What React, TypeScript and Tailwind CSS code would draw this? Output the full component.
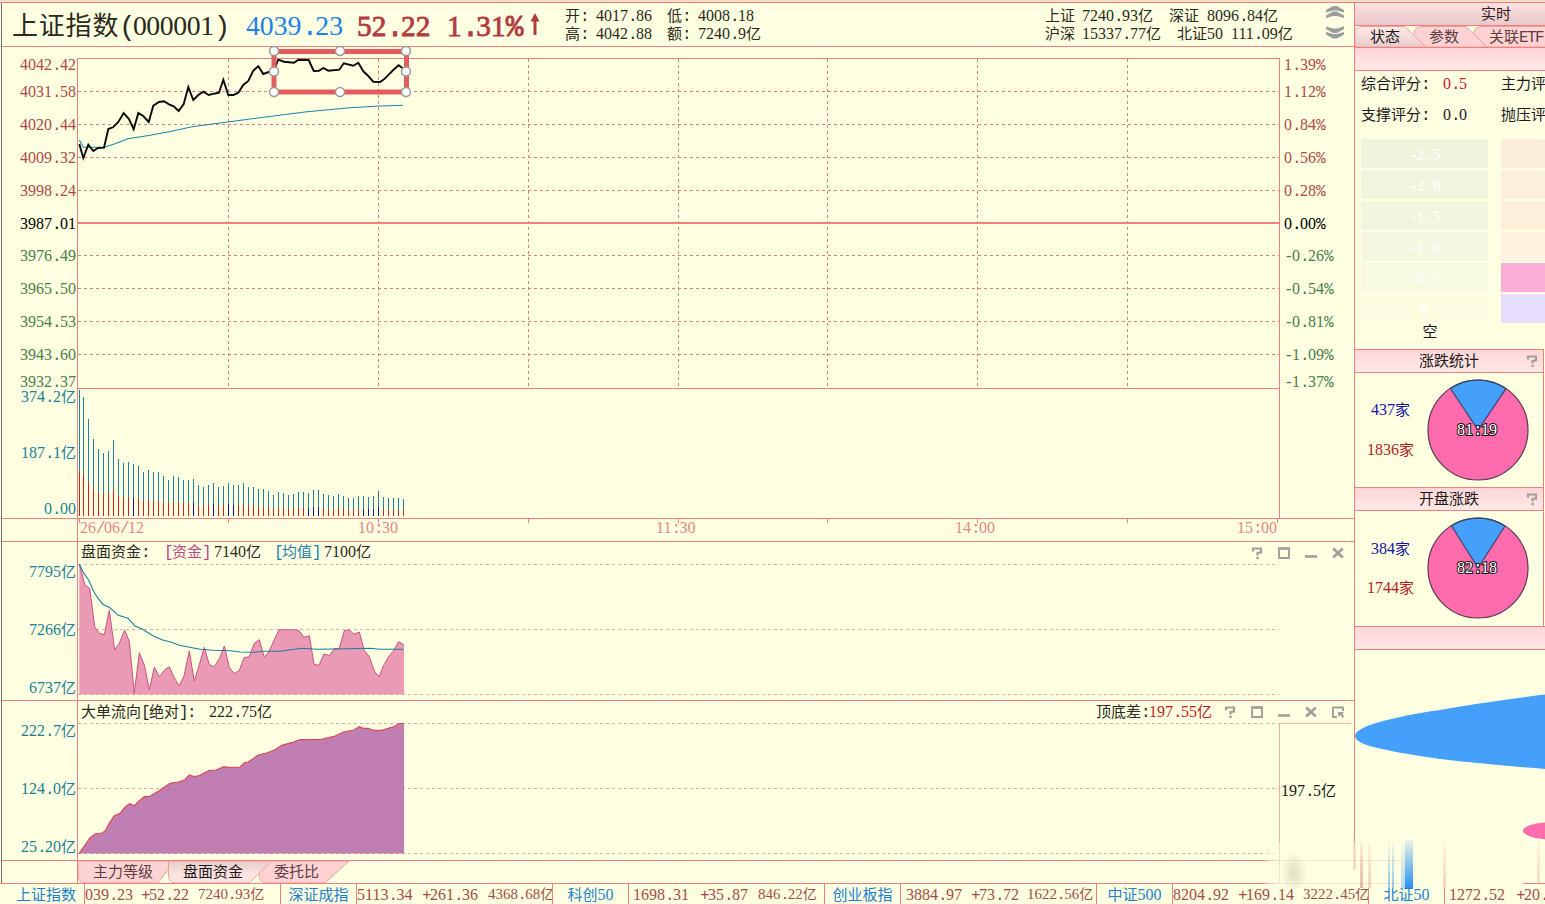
import React from 'react';
import { clsx } from 'clsx';

type Point = [number, number];

interface TickerItem {
  name: string;
  labelWidth: string;
  pad: string;
  price: string;
  priceWidth: string;
  change: string;
  changeWidth: string;
  amount: string;
}

// Series are stored on a grid three times finer than a screen pixel
const GRID = 3;

const price: Point[] = [
  [238, 432], [250, 474], [265, 434], [280, 453], [294, 444], [312, 443], [325, 387], [339, 382], [355, 366], [371, 339],
  [387, 357], [401, 388], [415, 339], [430, 348], [446, 366], [460, 317], [477, 306], [492, 304], [507, 313], [521, 319],
  [536, 333], [551, 312], [565, 261], [580, 300], [595, 285], [610, 275], [626, 285], [642, 281], [657, 278], [670, 239],
  [685, 285], [700, 285], [715, 278], [730, 255], [745, 243], [760, 212], [775, 199], [790, 222], [806, 216], [820, 214],
  [835, 179], [852, 185], [882, 188], [895, 179], [926, 180], [941, 213], [957, 212], [970, 204], [985, 212], [1018, 209],
  [1031, 190], [1060, 197], [1075, 188], [1090, 214], [1105, 228], [1120, 245], [1140, 246], [1152, 238], [1167, 223],
  [1182, 208], [1196, 196], [1210, 206],
];

const average: Point[] = [
  [238, 420], [250, 442], [312, 442], [345, 431], [384, 416], [450, 406], [507, 395], [576, 380], [666, 368], [750, 357],
  [921, 335], [1050, 323], [1125, 319], [1209, 316],
];

const volume = [
  377, 357, 290, 230, 200, 188, 195, 227, 170, 158, 161, 155, 149, 131, 137, 131, 131, 119, 107, 119, 116, 107, 107, 111,
  92, 86, 92, 98, 86, 89, 98, 92, 92, 98, 86, 86, 80, 80, 74, 62, 71, 68, 62, 65, 71, 71, 69, 77, 77, 65, 62, 59, 65, 59,
  53, 53, 59, 59, 56, 59, 74, 56, 53, 53, 53, 50,
];
const blueBars = [11, 23, 27, 30, 31, 46, 47, 48, 57, 58, 59, 60];

const funds: Point[] = [
  [238, 72], [255, 136], [269, 145], [284, 260], [298, 280], [313, 284], [328, 211], [344, 330], [358, 310], [374, 270],
  [388, 305], [403, 460], [418, 338], [433, 375], [448, 450], [463, 382], [478, 410], [493, 391], [508, 380], [523, 414],
  [538, 438], [552, 408], [568, 333], [583, 424], [598, 374], [613, 322], [628, 374], [643, 380], [658, 356], [673, 318],
  [688, 382], [703, 401], [718, 391], [732, 353], [748, 350], [763, 310], [778, 299], [793, 352], [806, 336], [837, 269],
  [885, 269], [897, 272], [912, 292], [928, 287], [942, 373], [957, 376], [972, 342], [988, 347], [1003, 326], [1018, 325],
  [1033, 272], [1047, 269], [1062, 283], [1078, 276], [1093, 332], [1108, 350], [1123, 393], [1137, 411], [1152, 374],
  [1168, 347], [1180, 334], [1196, 305], [1212, 314],
];

const fundsMean: Point[] = [
  [238, 72], [250, 98], [266, 120], [280, 152], [295, 176], [310, 194], [328, 202], [355, 226], [384, 235], [405, 258],
  [425, 266], [460, 288], [490, 301], [510, 305], [538, 316], [600, 328], [640, 331], [690, 332], [720, 336], [765, 337],
  [790, 334], [840, 334], [905, 325], [950, 328], [1040, 326], [1110, 325], [1140, 328], [1210, 328],
];

const orders: Point[] = [
  [238, 460], [255, 435], [270, 414], [285, 402], [305, 399], [315, 394], [328, 370], [343, 347], [360, 340], [375, 322],
  [389, 311], [403, 317], [418, 302], [433, 290], [450, 289], [475, 274], [510, 250], [535, 246], [555, 239], [568, 225],
  [585, 230], [600, 226], [628, 211], [648, 210], [672, 200], [685, 202], [720, 201], [733, 188], [745, 186], [775, 165],
  [800, 159], [825, 149], [845, 136], [875, 128], [900, 119], [965, 118], [1005, 108], [1030, 96], [1062, 90], [1078, 80],
  [1090, 85], [1105, 85], [1120, 91], [1145, 91], [1180, 80], [1200, 70], [1212, 70],
];

const priceLabels = ['4042.42', '4031.58', '4020.44', '4009.32', '3998.24', '3987.01', '3976.49', '3965.50', '3954.53', '3943.60', '3932.37'];
const percentLabels = ['1.39%', '1.12%', '0.84%', '0.56%', '0.28%', '0.00%', '-0.26%', '-0.54%', '-0.81%', '-1.09%', '-1.37%'];
const volumeLabels = ['374.2亿', '187.1亿', '0.00'];

const levels = [
  { label: '-2.5', left: 'bg-[#f0f4dc]', right: 'bg-[#faeed8]' },
  { label: '-2.0', left: 'bg-[#f1f5dd]', right: 'bg-[#fbf0da]' },
  { label: '-1.5', left: 'bg-[#f3f6df]', right: 'bg-[#fdf1dc]' },
  { label: '-1.0', left: 'bg-[#f5f7e0]', right: 'bg-[#fef3de]' },
  { label: '-0.5', left: 'bg-[#f7f9e1]', right: 'bg-[#fdaed6]' },
  { label: '0', left: 'bg-[#fefde2]', right: 'bg-[#e6defc]' },
];

const ticker: TickerItem[] = [
  { name: '上证指数', labelWidth: 'w-[83px] pr-[8px] justify-end', pad: 'pl-0', price: '039.23', priceWidth: 'w-[56px]', change: '+52.22', changeWidth: 'w-[57px]', amount: '7240.93亿' },
  { name: '深证成指', labelWidth: 'w-[75px] justify-center', pad: 'pl-0', price: '5113.34', priceWidth: 'w-[65px]', change: '+261.36', changeWidth: 'w-[66px]', amount: '4368.68亿' },
  { name: '科创50', labelWidth: 'w-[75px] justify-center', pad: 'pl-[4px]', price: '1698.31', priceWidth: 'w-[67px]', change: '+35.87', changeWidth: 'w-[58px]', amount: '846.22亿' },
  { name: '创业板指', labelWidth: 'w-[75px] justify-center', pad: 'pl-[5px]', price: '3884.97', priceWidth: 'w-[65px]', change: '+73.72', changeWidth: 'w-[56px]', amount: '1622.56亿' },
  { name: '中证500', labelWidth: 'w-[75px] justify-center', pad: 'pl-0', price: '8204.92', priceWidth: 'w-[65px]', change: '+169.14', changeWidth: 'w-[65px]', amount: '3222.45亿' },
  { name: '北证50', labelWidth: 'w-[75px] justify-center', pad: 'pl-[4px]', price: '1272.52', priceWidth: 'w-[67px]', change: '+20.', changeWidth: 'w-[57px]', amount: '' },
];

const toPoints = (series: Point[], top: number) =>
  series.map(([x, y]) => `${(x / GRID).toFixed(1)},${(top + y / GRID).toFixed(1)}`).join(' ');

// Every half-width glyph takes the same cell: digits in serif, signs in tightened mono
function Txt({ children, className }: { children: string; className?: string }) {
  const parts = children.split(/([0-9]+|[^\u0020-\u007e]+)/).filter(Boolean);
  return (
    <span className={clsx('whitespace-pre', className)}>
      {parts.map((part, i) => {
        if (/^[0-9]/.test(part)) {
          return <span key={i} className="text-[1.067em] leading-[0] font-['Liberation_Serif',serif]">{part}</span>;
        }
        if (part.charCodeAt(0) > 126) return part;
        return <span key={i} className="text-[1.067em] leading-[0] tracking-[-0.1em] font-['Liberation_Mono',monospace]">{part}</span>;
      })}
    </span>
  );
}

function HelpIcon() {
  return (
    <svg width="12" height="12" viewBox="0 0 12 12" className="shrink-0">
      <path d="M2 4.5V1.5H10V5.5L6.5 6V8.5" fill="none" stroke="#a0a09a" strokeWidth="2.2" />
      <rect x="5.4" y="9.8" width="2.4" height="2.2" fill="#a0a09a" />
    </svg>
  );
}

function WindowIcons({ popout }: { popout?: boolean }) {
  return (
    <div className="flex items-center gap-[15px]">
      <HelpIcon />
      <svg width="12" height="12" viewBox="0 0 12 12">
        <path d="M1 1.5H11V11H1Z" fill="none" stroke="#a0a09a" strokeWidth="1.9" />
        <path d="M0 1.5H12" stroke="#a0a09a" strokeWidth="2.4" />
      </svg>
      <svg width="12" height="12" viewBox="0 0 12 12">
        <path d="M0 9.5H12" stroke="#a0a09a" strokeWidth="2.6" />
      </svg>
      <svg width="12" height="12" viewBox="0 0 12 12">
        <path d="M1.2 1.5L10.8 10.5M10.8 1.5L1.2 10.5" stroke="#a0a09a" strokeWidth="2.8" />
      </svg>
      {popout && (
        <svg width="12" height="12" viewBox="0 0 12 12">
          <path d="M5 11H1V1.5H11V5" fill="none" stroke="#a0a09a" strokeWidth="1.9" />
          <path d="M6 6H12L10.5 7.5L12 10.5L10.5 12L8.5 9L6.5 11Z" fill="#a0a09a" />
        </svg>
      )}
    </div>
  );
}

function Header() {
  return (
    <div className="flex h-11 border-b border-[#f08080] pl-[10px]">
      <div className="flex w-[553px] shrink-0 items-center pb-[2px] leading-[40px]">
        <div className="flex w-[234px] shrink-0 text-[26px] text-[#2a2a20]">
          <Txt className="w-[107px] tracking-[0.8px]">上证指数</Txt>
          <Txt className="tracking-[-0.4px]">(000001)</Txt>
        </div>
        <div className="w-[111px] shrink-0 text-[26px] text-[#2080ee]"><Txt>4039.23</Txt></div>
        <div className="w-[90px] shrink-0 text-[27.5px] text-[#b23a40] [-webkit-text-stroke:0.8px_#b23a40]"><Txt>52.22</Txt></div>
        <div className="w-[82px] shrink-0 text-[27.5px] text-[#b23a40] [-webkit-text-stroke:0.8px_#b23a40]"><Txt>1.31%</Txt></div>
        <svg width="12" height="24" viewBox="0 0 12 24">
          <path d="M6 1L10.5 9.5H1.5Z" fill="#b23a40" />
          <path d="M6 6V23" stroke="#b23a40" strokeWidth="3" />
        </svg>
      </div>
      <div className="grid h-9 grid-cols-[102px_378px] pt-[3px] text-[15px] leading-[18px] text-[#2a2a20]">
        <Txt>开: 4017.86</Txt>
        <Txt>低: 4008.18</Txt>
        <Txt>高: 4042.88</Txt>
        <Txt>额: 7240.9亿</Txt>
      </div>
      <div className="w-[280px] pt-[3px] text-[15px] leading-[18px] text-[#2a2a20]">
        <div className="flex">
          <Txt className="w-[37px]">上证</Txt>
          <Txt className="w-[87px]">7240.93亿</Txt>
          <Txt className="w-[38px]">深证</Txt>
          <Txt>8096.84亿</Txt>
        </div>
        <div className="flex">
          <Txt className="w-[37px]">沪深</Txt>
          <Txt className="w-[95px]">15337.77亿</Txt>
          <Txt className="w-[54px]">北证50</Txt>
          <Txt>111.09亿</Txt>
        </div>
      </div>
      <svg width="20" height="40" viewBox="1324 3 20 40">
        <g fill="#9a9c9e">
          <path d="M1325 10L1332 6H1336L1343 10V12.500L1336 10.500H1332L1325 12.500Z" />
          <path d="M1325 15.500L1332 11.500H1336L1343 15.500V18L1336 16H1332L1325 18Z" />
          <path d="M1325 29L1332 33H1336L1343 29V26.500L1336 28.500H1332L1325 26.500Z" />
          <path d="M1325 34.500L1332 38.500H1336L1343 34.500V32L1336 34H1332L1325 32Z" />
        </g>
      </svg>
    </div>
  );
}

function MainChart() {
  const verticals = [228, 378, 528, 678, 827, 977, 1127];
  const horizontals = [91, 124, 157, 190, 255, 288, 321, 354];
  const ticks = [79, 228, 378, 528, 678, 827, 977, 1127, 1277];
  const handles: Point[] = [[274, 51], [340, 51], [406, 51], [274, 71.5], [406, 71.5], [274, 92], [340, 92], [406, 92]];

  return (
    <svg width="1203" height="471" viewBox="77 47 1203 471" className="shrink-0 overflow-visible">
      <g fill="none" stroke="#d98080" strokeDasharray="3 3" shapeRendering="crispEdges">
        {verticals.map((x) => <path key={x} d={`M${x + 0.5} 59V387`} />)}
        {horizontals.map((y) => <path key={y} d={`M78 ${y + 0.5}H1279`} />)}
      </g>
      <g fill="none" stroke="#f08080" shapeRendering="crispEdges">
        <path d="M77.5 541V58.5H1279.5V518M77 388.5H1279" />
        <path d="M78 223H1279" strokeWidth="2" />
        {ticks.map((x) => <path key={x} d={`M${x + 0.5} 519v4`} />)}
      </g>
      <g shapeRendering="crispEdges">
        {volume.map((v, i) => {
          const x = i === 0 ? 79 : i === 1 ? 83 : 88 + (i - 2) * 5;
          const h = Math.round(v / GRID);
          const inner = Math.round(h * 0.35);
          return (
            <g key={i}>
              <rect x={x} y={516 - h} width="1" height={h} fill="#1f7f9c" />
              <rect x={x} y={516 - inner} width="1" height={inner} fill={blueBars.includes(i) ? '#1010a0' : '#d02018'} />
            </g>
          );
        })}
      </g>
      <polyline points={toPoints(average, 0)} fill="none" stroke="#1f84ac" strokeWidth="1.1" />
      <polyline points={toPoints(price, 0)} fill="none" stroke="#0a0a08" strokeWidth="1.9" />
      {/* selection frame */}
      <rect x="274" y="51.5" width="132.5" height="40.5" fill="none" stroke="#e65c5c" strokeWidth="5" />
      {handles.map(([x, y]) => (
        <circle key={`${x}-${y}`} cx={x} cy={y} r="4.5" fill="#fff" stroke="#999" strokeWidth="1.5" />
      ))}
    </svg>
  );
}

function ChartArea() {
  const rows = 'grid grid-rows-[27px_33px_33px_33px_33px_32px_33px_33px_33px_27px_15px_56px_56px] text-[15px] leading-[14px] pt-[10px]';
  const tone = (i: number) => (i < 5 ? 'text-[#b04848]' : i === 5 ? 'text-black' : 'text-[#4a7d4c]');
  return (
    <div className="flex h-[472px] border-b border-[#f08080]">
      <div className={clsx(rows, 'w-[75px] shrink-0 justify-items-end pr-px')}>
        {priceLabels.map((label, i) => <Txt key={label} className={tone(i)}>{label}</Txt>)}
        {volumeLabels.map((label) => <Txt key={label} className="text-[#1c7f9a]">{label}</Txt>)}
      </div>
      <MainChart />
      <div className={clsx(rows, 'pl-[4px]')}>
        {percentLabels.map((label, i) => <Txt key={label} className={tone(i)}>{label}</Txt>)}
      </div>
    </div>
  );
}

function TimeAxis() {
  return (
    <div className="flex h-[23px] border-b border-[#f08080] pl-[78px] text-[15px] leading-[16px] text-[#e08886]">
      <Txt className="w-[278px]">26/06/12</Txt>
      <Txt className="w-[298px]">10:30</Txt>
      <Txt className="w-[299px]">11:30</Txt>
      <Txt className="w-[282px]">14:00</Txt>
      <Txt>15:00</Txt>
    </div>
  );
}

function SideLabels({ labels }: { labels: string[] }) {
  return (
    <div className="grid w-[75px] shrink-0 grid-rows-[58px_58px_18px] content-start justify-items-end pt-[20px] pr-px text-[15px] leading-[18px] text-[#1c7f9a]">
      {labels.map((label) => <Txt key={label}>{label}</Txt>)}
    </div>
  );
}

function FundsPanel() {
  return (
    <div className="flex h-[159px] border-b border-[#f08080]">
      <SideLabels labels={['7795亿', '7266亿', '6737亿']} />
      <div className="flex-1 border-l border-[#f08080]">
        <div className="flex h-[22px] items-center pr-[10px] pb-[4px] pl-[3px] text-[15px] leading-[18px] text-[#2a2a20]">
          <Txt className="w-[83px]">盘面资金:</Txt>
          <Txt className="w-[50px] text-[#b84a86]">[资金]</Txt>
          <Txt className="w-[60px]">7140亿</Txt>
          <Txt className="w-[50px] text-[#1c7fae]">[均值]</Txt>
          <Txt>7100亿</Txt>
          <div className="ml-auto pt-[4px]"><WindowIcons /></div>
        </div>
        <svg width="1202" height="136" viewBox="78 564 1202 136">
          <polygon points={`${toPoints(funds, 540)} 404,694.5 79.3,694.5`} fill="#ea9ab4" />
          <polyline points={toPoints(funds, 540)} fill="none" stroke="#cc4f80" />
          <path d="M78 564.5H1279M78 629.5H1279M78 694.5H1279" stroke="#dc8c82" strokeOpacity=".7" strokeDasharray="3 3" />
          <polyline points={toPoints(fundsMean, 540)} fill="none" stroke="#1c7f9c" strokeWidth="1.1" />
        </svg>
      </div>
    </div>
  );
}

function OrdersPanel() {
  return (
    <div className="flex h-[160px] border-b border-[#f08080]">
      <SideLabels labels={['222.7亿', '124.0亿', '25.20亿']} />
      <div className="flex-1 border-l border-[#f08080]">
        <div className="flex h-[22px] items-center pr-[10px] pb-[3px] pl-[3px] text-[15px] leading-[18px] text-[#2a2a20]">
          <Txt className="w-[128px]">大单流向[绝对]:</Txt>
          <Txt>222.75亿</Txt>
          <Txt className="ml-auto">顶底差:</Txt>
          <Txt className="mr-[12px] text-[#c01c28]">197.55亿</Txt>
          <div className="pt-[3px]"><WindowIcons popout /></div>
        </div>
        <div className="flex">
          <svg width="1201" height="137" viewBox="78 723 1201 137">
            <polygon points={`${toPoints(orders, 700)} 404,853.5 79.3,853.5`} fill="#c07eb2" />
            <polyline points={toPoints(orders, 700)} fill="none" stroke="#dc4858" strokeWidth="1.2" />
            <path d="M78 723.5H1279M78 788.5H1279M78 853.5H1279" stroke="#b86a70" strokeOpacity=".55" strokeDasharray="3 3" />
          </svg>
          <div className="mr-[2px] flex-1 border-t border-l border-[#eeb0a4] pt-[57px] pl-px text-[15px] leading-[18px] text-[#1a1a14]">
            <Txt>197.5亿</Txt>
          </div>
        </div>
      </div>
    </div>
  );
}

function BottomTabs() {
  return (
    <div className="flex h-[22px] pl-[75px]">
      <div className="relative flex flex-1 border-l border-[#f08080] pl-[15px] text-[15px] leading-[20px] text-[#5c4040]">
        <svg width="280" height="22" viewBox="78 861 280 22" className="absolute top-0 left-0">
          <defs>
            <linearGradient id="tabActive" x2="0" y2="1">
              <stop offset="0" stopColor="#e6cccc" />
              <stop offset=".6" stopColor="#fde4e2" />
            </linearGradient>
          </defs>
          <g stroke="#f0a09a">
            <path d="M259 861V875Q259 883 267 883H325L349 861Z" fill="#ffd2d4" />
            <path d="M78 861V875Q78 883 86 883H158L175 861Z" fill="#ffd2d4" />
            <path d="M168.500 861V875Q168.500 883 176 883H249L272 861Z" fill="url(#tabActive)" />
          </g>
        </svg>
        <Txt className="relative w-[90px]">主力等级</Txt>
        <Txt className="relative w-[91px] text-[#201818]">盘面资金</Txt>
        <Txt className="relative">委托比</Txt>
      </div>
    </div>
  );
}

function SectionTitle({ children }: { children?: string }) {
  return (
    <div className="flex h-6 items-center border-y border-[#f08080] bg-linear-to-b from-[#ffd6d8] to-[#ffe8e6] pl-[64px] text-[15px] leading-[18px] text-[#201818]">
      {children && (
        <>
          <Txt className="w-[107px] pb-[3px]">{children}</Txt>
          <HelpIcon />
        </>
      )}
    </div>
  );
}

function PieSection({ title, down, up, ratio, wedge, last }: { title: string; down: string; up: string; ratio: string; wedge: string; last?: boolean }) {
  return (
    <div className="mr-px border-r border-[#f08080]">
      <SectionTitle>{title}</SectionTitle>
      <div className={clsx('flex', last ? 'h-[115px]' : 'h-[114px]')}>
        <div className={clsx('flex w-[71px] flex-col items-center text-[15px] leading-[18px]', last ? 'gap-[21px] pt-[28px]' : 'gap-[22px] pt-[27px]')}>
          <Txt className="text-[#1414a0]">{down}</Txt>
          <Txt className="text-[#b01c1c]">{up}</Txt>
        </div>
        <div className={clsx('relative flex items-center justify-center', last && 'pb-[1px]')}>
          <svg width="104" height="104" viewBox="-52 -52 104 104">
            <circle r="50" fill="#ff6cae" stroke="#5a3850" strokeWidth="1.2" />
            <path d={wedge} fill="#44a0fa" stroke="#3a4468" strokeWidth="1.2" />
          </svg>
          <span className="absolute top-[47px] left-[31px] text-[15px] leading-[18px] text-white [paint-order:stroke] [-webkit-text-stroke:2px_#101010]">
            <Txt>{ratio}</Txt>
          </span>
        </div>
      </div>
    </div>
  );
}

function SidePanel() {
  return (
    <div className="w-[191px] shrink-0 overflow-hidden border-l border-[#f08080] text-[15px] leading-[18px]">
      <div className="flex h-[23px] items-center border-b border-[#f08080] bg-linear-to-b from-[#ffe2e2] to-[#e8c8cb] pb-[2px] pl-[126px] text-[#302020]">
        <Txt>实时</Txt>
      </div>
      <div className="relative flex h-[22px] items-center border-b border-[#f08080] pb-px pl-[15px]">
        <svg width="190" height="21" viewBox="1355 26 190 21" className="absolute top-0 left-0">
          <defs>
            <linearGradient id="statusTab" x2="0" y2="1">
              <stop offset="0" stopColor="#ffeae8" />
              <stop offset="1" stopColor="#e6cccc" />
            </linearGradient>
          </defs>
          <g stroke="#f0a09a">
            <path d="M1474 47V34Q1474 26.500 1482 26.500H1550V47Z" fill="#ffd2d4" />
            <path d="M1414 47V34Q1414 26.500 1422 26.500H1466L1487 47Z" fill="#ffd2d4" />
            <path d="M1355 47V31Q1357 26.500 1364 26.500H1405L1426 47Z" fill="url(#statusTab)" />
          </g>
        </svg>
        <Txt className="relative w-[59px] text-[#201818]">状态</Txt>
        <Txt className="relative w-[60px] text-[#5c4040]">参数</Txt>
        <Txt className="relative text-[#5c4040]">关联ETF</Txt>
      </div>
      <div className="h-[23px] border-b border-[#f08080] bg-linear-to-b from-[#ffd6d8] to-[#ffe8e6]" />
      <div className="h-[278px] pt-[3px] pl-[6px] text-[#201818]">
        <div className="flex h-[31px]">
          <Txt className="w-[82px] shrink-0">综合评分:</Txt>
          <Txt className="w-[58px] shrink-0 text-[#c8202c]">0.5</Txt>
          <Txt>主力评</Txt>
        </div>
        <div className="flex h-[34px]">
          <Txt className="w-[82px] shrink-0">支撑评分:</Txt>
          <Txt className="w-[58px] shrink-0">0.0</Txt>
          <Txt>抛压评</Txt>
        </div>
        <div className="flex flex-col gap-[2px]">
          {levels.map((level) => (
            <div key={level.label} className="flex h-[29px] gap-[13px]">
              <div className={clsx('flex w-[127px] shrink-0 items-center justify-center font-bold text-[#fdfdf4]', level.left)}>
                <Txt>{level.label}</Txt>
              </div>
              <div className={clsx('w-[50px] shrink-0', level.right)} />
            </div>
          ))}
        </div>
        <div className="w-[138px] text-center leading-[16px]"><Txt>空</Txt></div>
      </div>
      <PieSection title="涨跌统计" down="437家" up="1836家" ratio="81:19" wedge="M0 0L-27.500 -41.500A50 50 0 0 1 28 -41.300Z" />
      <PieSection title="开盘涨跌" down="384家" up="1744家" ratio="82:18" wedge="M0 0L-26.500 -42.300A50 50 0 0 1 27 -42Z" last />
      <SectionTitle />
      <svg width="190" height="233" viewBox="1355 650 190 233">
        <path d="M1546 694.500C1500 700 1465 705.500 1440 710C1415 713.500 1395 717.500 1376 723C1350 731 1350 739 1366.500 745C1385 751 1430 758 1453 760.500C1490 764.500 1520 767 1546 769Z" fill="#44a0fa" />
        <path d="M1546 822.500C1528 824 1523 828 1523 831S1530 838 1546 839.500Z" fill="#ff6cae" />
      </svg>
    </div>
  );
}

function TickerBar() {
  return (
    <div className="flex h-[21px] overflow-hidden border-t border-[#f08080] pl-px text-[15px] leading-[19px]">
      {ticker.map((item) => (
        <React.Fragment key={item.name}>
          <div className={clsx('flex shrink-0 text-[#2080d0]', item.labelWidth)}><Txt>{item.name}</Txt></div>
          <div className={clsx('flex w-[197px] shrink-0 overflow-hidden border-x border-[#f08080] text-[#a24c4a]', item.pad)}>
            <Txt className={clsx('shrink-0', item.priceWidth)}>{item.price}</Txt>
            <Txt className={clsx('shrink-0', item.changeWidth)}>{item.change}</Txt>
            <span className="text-[14px]"><Txt>{item.amount}</Txt></span>
          </div>
        </React.Fragment>
      ))}
    </div>
  );
}

// Faded streaks over the lower right corner
function CornerStreaks() {
  return (
    <svg width="279" height="48" viewBox="1266 840 279 48" className="absolute top-[840px] left-[1266px]">
      <defs>
        <linearGradient id="cover" x2="1" y2="0">
          <stop offset="0" stopColor="#ffffe1" stopOpacity=".4" />
          <stop offset=".06" stopColor="#ffffe1" />
        </linearGradient>
        <linearGradient id="streakBlue" x2="0" y2="1">
          <stop offset="0" stopColor="#2a90f4" stopOpacity=".1" />
          <stop offset="1" stopColor="#2a90f4" />
        </linearGradient>
        <linearGradient id="streakPink" x2="0" y2="1">
          <stop offset="0" stopColor="#f08080" stopOpacity=".1" />
          <stop offset="1" stopColor="#d89090" stopOpacity=".65" />
        </linearGradient>
        <radialGradient id="smudge">
          <stop offset="0" stopColor="#b8b8a0" stopOpacity=".45" />
          <stop offset="1" stopColor="#b8b8a0" stopOpacity="0" />
        </radialGradient>
      </defs>
      <rect x="1266" y="842" width="257" height="46" fill="url(#cover)" />
      <rect x="1523" y="842" width="22" height="40" fill="#ffffe1" />
      <path d="M1266 860.500H1400M1266 883.500H1400" stroke="#f0a8a0" strokeOpacity=".3" />
      <path d="M1279.500 840V884" stroke="#f0a8a0" strokeOpacity=".35" />
      <path d="M1354.500 842V870" stroke="#f08080" strokeOpacity=".4" strokeWidth="2" />
      <ellipse cx="1294" cy="873" rx="14" ry="22" fill="url(#smudge)" />
      <rect x="1360" y="842" width="3" height="46" fill="url(#streakPink)" />
      <rect x="1368" y="842" width="3" height="46" fill="url(#streakPink)" opacity=".6" />
      <rect x="1388" y="842" width="2" height="46" fill="url(#streakBlue)" opacity=".5" />
      <rect x="1392" y="842" width="2" height="46" fill="url(#streakBlue)" opacity=".5" />
      <rect x="1401" y="842" width="4" height="46" fill="url(#streakBlue)" opacity=".35" />
      <rect x="1405" y="840" width="8" height="48" fill="url(#streakBlue)" />
      <rect x="1443" y="842" width="3" height="46" fill="url(#streakPink)" opacity=".6" />
      <rect x="1537" y="840" width="3" height="44" fill="url(#streakPink)" opacity=".5" />
      <path d="M1538 831.500H1546V839.500L1538 838.500Z" fill="#ff6cae" />
    </svg>
  );
}

export default function App() {
  return (
    <div className="relative h-[904px] w-[1545px] overflow-hidden bg-[#ffffe1] font-['Noto_Sans_CJK_SC',sans-serif]">
      <div className="h-[3px] border-b border-[#f08080] bg-[#f2dfc6]" />
      <div className="flex h-[880px]">
        <div className="ml-px w-[1353px] shrink-0 border-l border-[#77706c]">
          <Header />
          <ChartArea />
          <TimeAxis />
          <FundsPanel />
          <OrdersPanel />
          <BottomTabs />
        </div>
        <SidePanel />
      </div>
      <TickerBar />
      <CornerStreaks />
    </div>
  );
}
